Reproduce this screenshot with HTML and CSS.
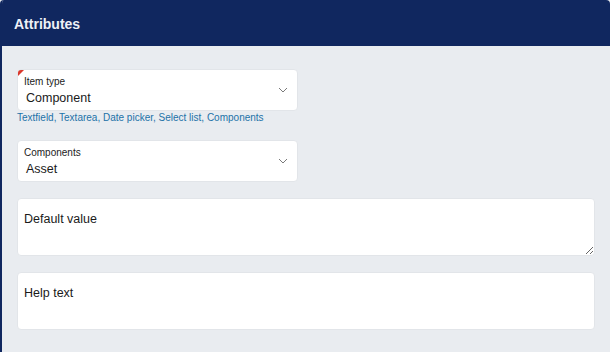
FILE: index.html
```html
<!DOCTYPE html>
<html lang="en">
<head>
    <meta charset="UTF-8">
    <title>Attributes</title>
    <link rel="stylesheet" href="styles.css">
</head>
<body>

<div class="panel">
    <!-- Header -->
    <div class="panel-header">
        <h2>Attributes</h2>
    </div>

    <!-- Form -->
    <div class="panel-body">
        <div class="field-group">
            <div class="select-field required">
                <div class="select-text">
                    <span class="select-label">Item type</span>
                    <span class="select-value">Component</span>
                </div>
                <svg class="chevron" width="10" height="6" viewBox="0 0 10 6">
                    <path d="M1 1l4 4 4-4" fill="none" stroke="#6b6b6b" stroke-width="0.9"/>
                </svg>
            </div>
            <div class="help-text">Textfield, Textarea, Date picker, Select list, Components</div>
        </div>

        <div class="field-group">
            <div class="select-field">
                <div class="select-text">
                    <span class="select-label">Components</span>
                    <span class="select-value">Asset</span>
                </div>
                <svg class="chevron" width="10" height="6" viewBox="0 0 10 6">
                    <path d="M1 1l4 4 4-4" fill="none" stroke="#6b6b6b" stroke-width="0.9"/>
                </svg>
            </div>
        </div>

        <div class="field-group">
            <textarea class="text-area" placeholder="Default value"></textarea>
        </div>

        <div class="field-group">
            <textarea class="text-area no-resize" placeholder="Help text"></textarea>
        </div>
    </div>
</div>

</body>
</html>
```

FILE: styles.css
```css
body {
    margin: 0;
    font-family: 'Liberation Sans', Arial, sans-serif;
    background-color: #e9ecf0;
}

.panel {
    height: 352px;
    box-sizing: border-box;
    border-left: 2px solid #10275f;
    border-radius: 4px 4px 0 0;
    background-color: #e9ecf0;
    overflow: hidden;
}

.panel-header {
    background-color: #10275f;
    padding: 16px 12px 14px;
}

.panel-header h2 {
    margin: 0;
    font-size: 14px;
    line-height: 16px;
    font-weight: bold;
    color: #eef1f7;
}

.panel-body {
    padding: 23px 15px 0 15px;
}

.field-group {
    margin-bottom: 16px;
}

.select-field {
    position: relative;
    width: 281px;
    height: 42px;
    box-sizing: border-box;
    background-color: #fff;
    border: 1px solid #e2e5e9;
    border-radius: 4px;
    padding: 6px 9px 0 6px;
    display: flex;
    align-items: flex-start;
    justify-content: space-between;
    overflow: hidden;
}

/* red marker for required field */
.select-field.required::before {
    content: '';
    position: absolute;
    top: 0;
    left: 0;
    border-top: 6px solid #d9372b;
    border-right: 6px solid transparent;
}

.select-text {
    display: flex;
    flex-direction: column;
}

.select-label {
    font-size: 10px;
    line-height: 12px;
    color: #222;
    margin-bottom: 2px;
}

.select-value {
    font-size: 12.5px;
    line-height: 16px;
    color: #1a1a1a;
    padding-left: 2px;
}

.chevron {
    align-self: center;
    margin-top: -6px;
}

.help-text {
    margin-top: 1px;
    margin-bottom: 2px;
    font-size: 10px;
    line-height: 12px;
    color: #1d72a8;
}

.text-area {
    display: block;
    width: 100%;
    height: 58px;
    box-sizing: border-box;
    background-color: #fff;
    border: 1px solid #e2e5e9;
    border-radius: 4px;
    padding: 12px 6px;
    font-family: 'Liberation Sans', Arial, sans-serif;
    font-size: 12.5px;
    line-height: 16px;
    color: #1a1a1a;
    outline: none;
}

.text-area::placeholder {
    color: #1a1a1a;
    opacity: 1;
}

.no-resize {
    resize: none;
}
```
